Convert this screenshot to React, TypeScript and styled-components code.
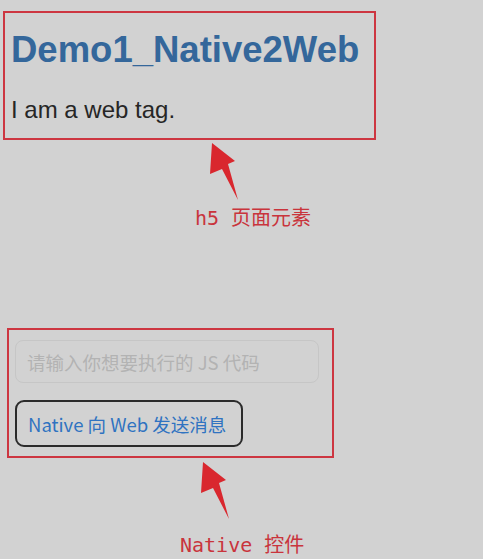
import React from "react";
import styled, { createGlobalStyle } from "styled-components";

const Global = createGlobalStyle`
  html, body { margin: 0; padding: 0; background: #d2d2d2; }
  body { width: 483px; height: 559px; overflow: hidden; font-family: "Liberation Sans", Arial, sans-serif; }
`;

const Page = styled.div`
  display: flex;
  flex-direction: column;
  align-items: flex-start;
  width: 483px;
  height: 559px;
  background: #d2d2d2;
`;

const MarkBox = styled.section<{ $left: number; $top: number; $width: number; $height: number }>`
  box-sizing: border-box;
  margin-left: ${(p) => p.$left}px;
  margin-top: ${(p) => p.$top}px;
  width: ${(p) => p.$width}px;
  height: ${(p) => p.$height}px;
  border: 2px solid #cd3641;
  display: flex;
  flex-direction: column;
  align-items: flex-start;
`;

const WebContent = styled.div`
  padding: 16px 0 0 6px;
  display: flex;
  flex-direction: column;
`;

const Title = styled.h1`
  margin: 0;
  font-family: "Liberation Sans", Arial, sans-serif;
  font-weight: 700;
  font-size: 36.5px;
  line-height: 41px;
  color: #34679b;
`;

const Para = styled.p`
  margin: 26px 0 0 0;
  font-family: "Liberation Sans", Arial, sans-serif;
  font-size: 24px;
  line-height: 28px;
  color: #262626;
`;

const NativeContent = styled.div`
  padding: 10px 0 0 6px;
  display: flex;
  flex-direction: column;
  align-items: flex-start;
  gap: 17px;
`;

const CodeInput = styled.input`
  box-sizing: border-box;
  width: 304px;
  height: 43px;
  border: 1px solid #c6c6c6;
  border-radius: 8px;
  background: transparent;
  padding: 0 11px;
  font-family: "Noto Sans CJK SC", "Noto Sans", sans-serif;
  font-size: 18.5px;
  color: #333;
  outline: none;
  &::placeholder { color: #b3b3b3; }
`;

const SendButton = styled.button`
  box-sizing: border-box;
  width: 228px;
  height: 47px;
  border: 2px solid #2b2b2b;
  border-radius: 9px;
  background: transparent;
  padding: 0 0 0 11px;
  text-align: left;
  font-family: "Noto Sans CJK SC", "Noto Sans", sans-serif;
  font-size: 18.5px;
  color: #2f73c1;
`;

const Callout = styled.div<{ $top: number }>`
  display: flex;
  flex-direction: column;
  align-items: flex-start;
  margin-top: ${(p) => p.$top}px;
`;

const ArrowSvg = styled.svg<{ $left: number }>`
  display: block;
  margin-left: ${(p) => p.$left}px;
`;

const Label = styled.div<{ $left: number; $gap: number }>`
  margin-left: ${(p) => p.$left}px;
  margin-top: ${(p) => p.$gap}px;
  font-family: "DejaVu Sans Mono", "Noto Sans CJK SC", monospace;
  font-size: 20px;
  line-height: 24px;
  color: #c9343c;
  white-space: pre;
`;

const Arrow: React.FC<{ left: number }> = ({ left }) => (
  <ArrowSvg $left={left} width="32" height="60" viewBox="0 0 32 60">
    <polygon points="2,1 25,19 18,22 28,58 12,27 0,32" fill="#d9272e" />
  </ArrowSvg>
);

export default function App() {
  return (
    <>
      <Global />
      <Page>
        <MarkBox $left={3} $top={11} $width={373} $height={129}>
          <WebContent>
            <Title>Demo1_Native2Web</Title>
            <Para>I am a web tag.</Para>
          </WebContent>
        </MarkBox>
        <Callout $top={2}>
          <Arrow left={210} />
          <Label $left={195} $gap={4}>{"h5 页面元素"}</Label>
        </Callout>
        <MarkBox $left={7} $top={98} $width={327} $height={130}>
          <NativeContent>
            <CodeInput placeholder="请输入你想要执行的 JS 代码" />
            <SendButton>Native 向 Web 发送消息</SendButton>
          </NativeContent>
        </MarkBox>
        <Callout $top={3}>
          <Arrow left={201} />
          <Label $left={180} $gap={12}>{"Native 控件"}</Label>
        </Callout>
      </Page>
    </>
  );
}
